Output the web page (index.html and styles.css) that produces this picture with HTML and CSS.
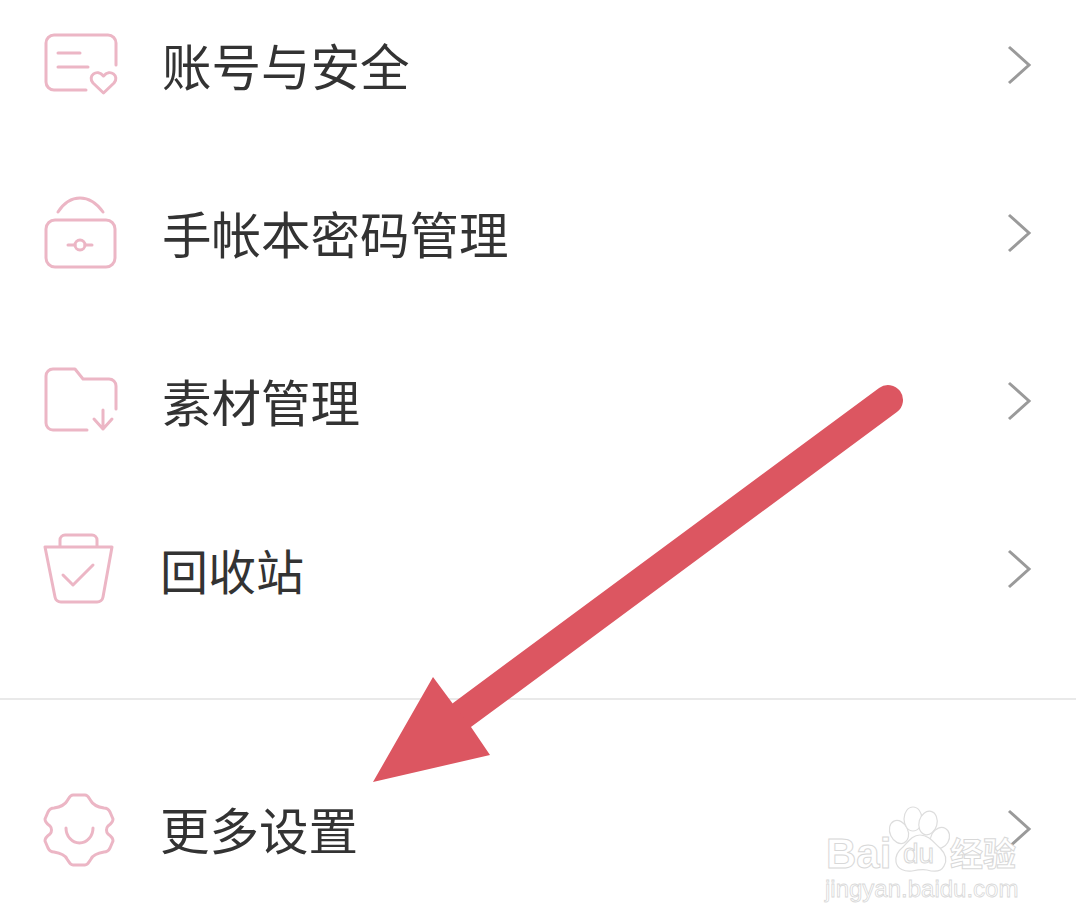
FILE: index.html
```html
<!DOCTYPE html>
<html lang="zh-CN">
<head>
    <meta charset="UTF-8">
    <meta name="viewport" content="width=device-width, initial-scale=1.0">
    <title>更多设置</title>
    <link rel="stylesheet" href="styles.css">
</head>
<body>
    <div class="page">
        <div class="menu-group">
            <div class="menu-row">
                <svg class="menu-icon" viewBox="0 0 80 80">
                    <path d="M76 37V15a8 8 0 0 0-8-8H14a8 8 0 0 0-8 8v39a8 8 0 0 0 8 8h32"/>
                    <path d="M18 25h22M18 39h30"/>
                    <path d="M63.500 65L53 55c-6-7 4-15 10.500-7 6.500-8 16.500 0 10.500 7z"/>
                </svg>
                <span class="menu-label">账号与安全</span>
                <svg class="chevron" viewBox="0 0 26 40"><path d="M2 2l20 18L2 38"/></svg>
            </div>
            <div class="menu-row">
                <svg class="menu-icon" viewBox="0 0 80 80">
                    <rect x="6" y="24" width="69" height="47" rx="9"/>
                    <path d="M18 16Q27 2 40 2T63 16"/>
                    <circle cx="40" cy="49" r="5"/>
                    <path d="M28 49h7M45 49h7"/>
                </svg>
                <span class="menu-label">手帐本密码管理</span>
                <svg class="chevron" viewBox="0 0 26 40"><path d="M2 2l20 18L2 38"/></svg>
            </div>
            <div class="menu-row">
                <svg class="menu-icon" viewBox="0 0 80 80">
                    <path d="M76 45V22a7 7 0 0 0-7-7H43L35 5H13a7 7 0 0 0-7 7v47a7 7 0 0 0 7 7h34"/>
                    <path d="M63 46v19M54 55l9 10 9-10"/>
                </svg>
                <span class="menu-label">素材管理</span>
                <svg class="chevron" viewBox="0 0 26 40"><path d="M2 2l20 18L2 38"/></svg>
            </div>
            <div class="menu-row">
                <svg class="menu-icon" viewBox="0 0 80 80">
                    <path d="M20 14V8a5 5 0 0 1 5-5h27a5 5 0 0 1 5 5v6"/>
                    <path d="M5 15h67l-9 50a6 6 0 0 1-6 5H21a6 6 0 0 1-6-5z"/>
                    <path d="M23 43l10 10 20-20"/>
                </svg>
                <span class="menu-label menu-label-small">回收站</span>
                <svg class="chevron" viewBox="0 0 26 40"><path d="M2 2l20 18L2 38"/></svg>
            </div>
        </div>
        <div class="menu-group menu-group-last">
            <div class="menu-row">
                <svg class="menu-icon" viewBox="0 0 80 80">
                    <path d="M33 3H45C48 3 49 6 51 9C53 13 58 15 64 16C67 16 69 18 70 20L73 27C73 30 71 32 68 34C66 36 66 40 68 42C71 44 73 46 73 49L70 56C69 58 67 60 64 60C58 61 53 63 51 67C49 70 48 73 45 73H33C30 73 29 70 27 67C25 63 20 61 14 60C11 60 9 58 8 56L5 49C5 46 7 44 10 42C12 40 12 36 10 34C7 32 5 30 5 27L8 20C9 18 11 16 14 16C20 15 25 13 27 9C29 6 30 3 33 3Z"/>
                    <path d="M26 36a13.500 15 0 0 0 27 0"/>
                </svg>
                <span class="menu-label menu-label-left">更多设置</span>
                <svg class="chevron" viewBox="0 0 26 40"><path d="M2 2l20 18L2 38"/></svg>
            </div>
        </div>

        <!-- watermark -->
        <svg class="watermark" viewBox="0 0 200 110">
            <g class="wm-shape">
                <ellipse cx="74" cy="32" rx="9" ry="12" transform="rotate(-25 74 32)"/>
                <ellipse cx="88" cy="19" rx="9" ry="12"/>
                <ellipse cx="103" cy="23" rx="9" ry="12" transform="rotate(15 103 23)"/>
                <ellipse cx="115" cy="38" rx="9" ry="11" transform="rotate(30 115 38)"/>
                <path d="M95 35c-8 0-12 7-17 12-5 4-8 9-7 15 1 7 9 10 16 9 5-1 10-2 15-1 7 2 14 2 17-4 4-7 1-13-4-18-6-5-11-13-20-13z"/>
            </g>
            <text class="wm-du" x="78" y="63">du</text>
            <text class="wm-bai" x="1" y="68">Bai</text>
            <text class="wm-cn" x="125" y="66">经验</text>
            <text class="wm-url" x="0" y="97">jingyan.baidu.com</text>
        </svg>

        <!-- annotation arrow -->
        <svg class="arrow" viewBox="0 0 1076 924">
            <path class="arrow-shaft" d="M888 400L462 715"/>
            <path class="arrow-head" d="M373 782L433 677L453 704L471 727L490 755Z"/>
        </svg>
    </div>
</body>
</html>
```

FILE: styles.css
```css
html, body {
    margin: 0;
    padding: 0;
    background-color: #ffffff;
}

.page {
    position: relative;
    width: 1076px;
    height: 924px;
    overflow: hidden;
    font-family: "Noto Sans CJK SC", "Noto Sans", sans-serif;
}

.menu-group {
    margin-top: -16px;
    padding-bottom: 42px;
    border-bottom: 2px solid #e9e9e9;
}

.menu-group-last {
    margin-top: 0;
    padding-top: 48px;
    padding-bottom: 0;
    border-bottom: none;
}

.menu-row {
    display: flex;
    align-items: center;
    height: 168px;
    padding-left: 40px;
    padding-right: 43px;
}

.menu-icon {
    width: 80px;
    height: 80px;
    flex-shrink: 0;
    fill: none;
    stroke: #ecb6c5;
    stroke-width: 3;
    stroke-linecap: round;
    stroke-linejoin: round;
}

.menu-label {
    margin-left: 42px;
    margin-top: -6px;
    font-size: 49.500px;
    color: #333333;
    line-height: 1;
}

.menu-label-small {
    margin-left: 40px;
    font-size: 48px;
}

.menu-label-left {
    margin-left: 40px;
}

.chevron {
    width: 26px;
    height: 40px;
    margin-left: auto;
    margin-top: -6px;
    fill: none;
    stroke: #9a9a9a;
    stroke-width: 3;
}

.watermark {
    position: absolute;
    left: 825px;
    top: 800px;
    width: 200px;
    height: 110px;
    overflow: visible;
}

.wm-shape ellipse,
.wm-shape path {
    fill: #ffffff;
    stroke: #dddddd;
    stroke-width: 1.200;
}

.wm-bai, .wm-du, .wm-url {
    font-family: "Liberation Sans", sans-serif;
    fill: #ffffff;
    stroke: #d8d8d8;
    stroke-width: 1;
}

.wm-bai {
    font-size: 42px;
    font-weight: bold;
}

.wm-du {
    font-size: 28px;
}

.wm-cn {
    font-family: "Noto Sans CJK SC", sans-serif;
    font-size: 33px;
    font-weight: bold;
    fill: #ffffff;
    stroke: #d8d8d8;
    stroke-width: 1;
}

.wm-url {
    font-size: 24px;
    stroke-width: 0.800;
}

.arrow {
    position: absolute;
    left: 0;
    top: 0;
    width: 1076px;
    height: 924px;
}

.arrow-shaft {
    fill: none;
    stroke: #dc5661;
    stroke-width: 30;
    stroke-linecap: round;
}

.arrow-head {
    fill: #dc5661;
}
```
